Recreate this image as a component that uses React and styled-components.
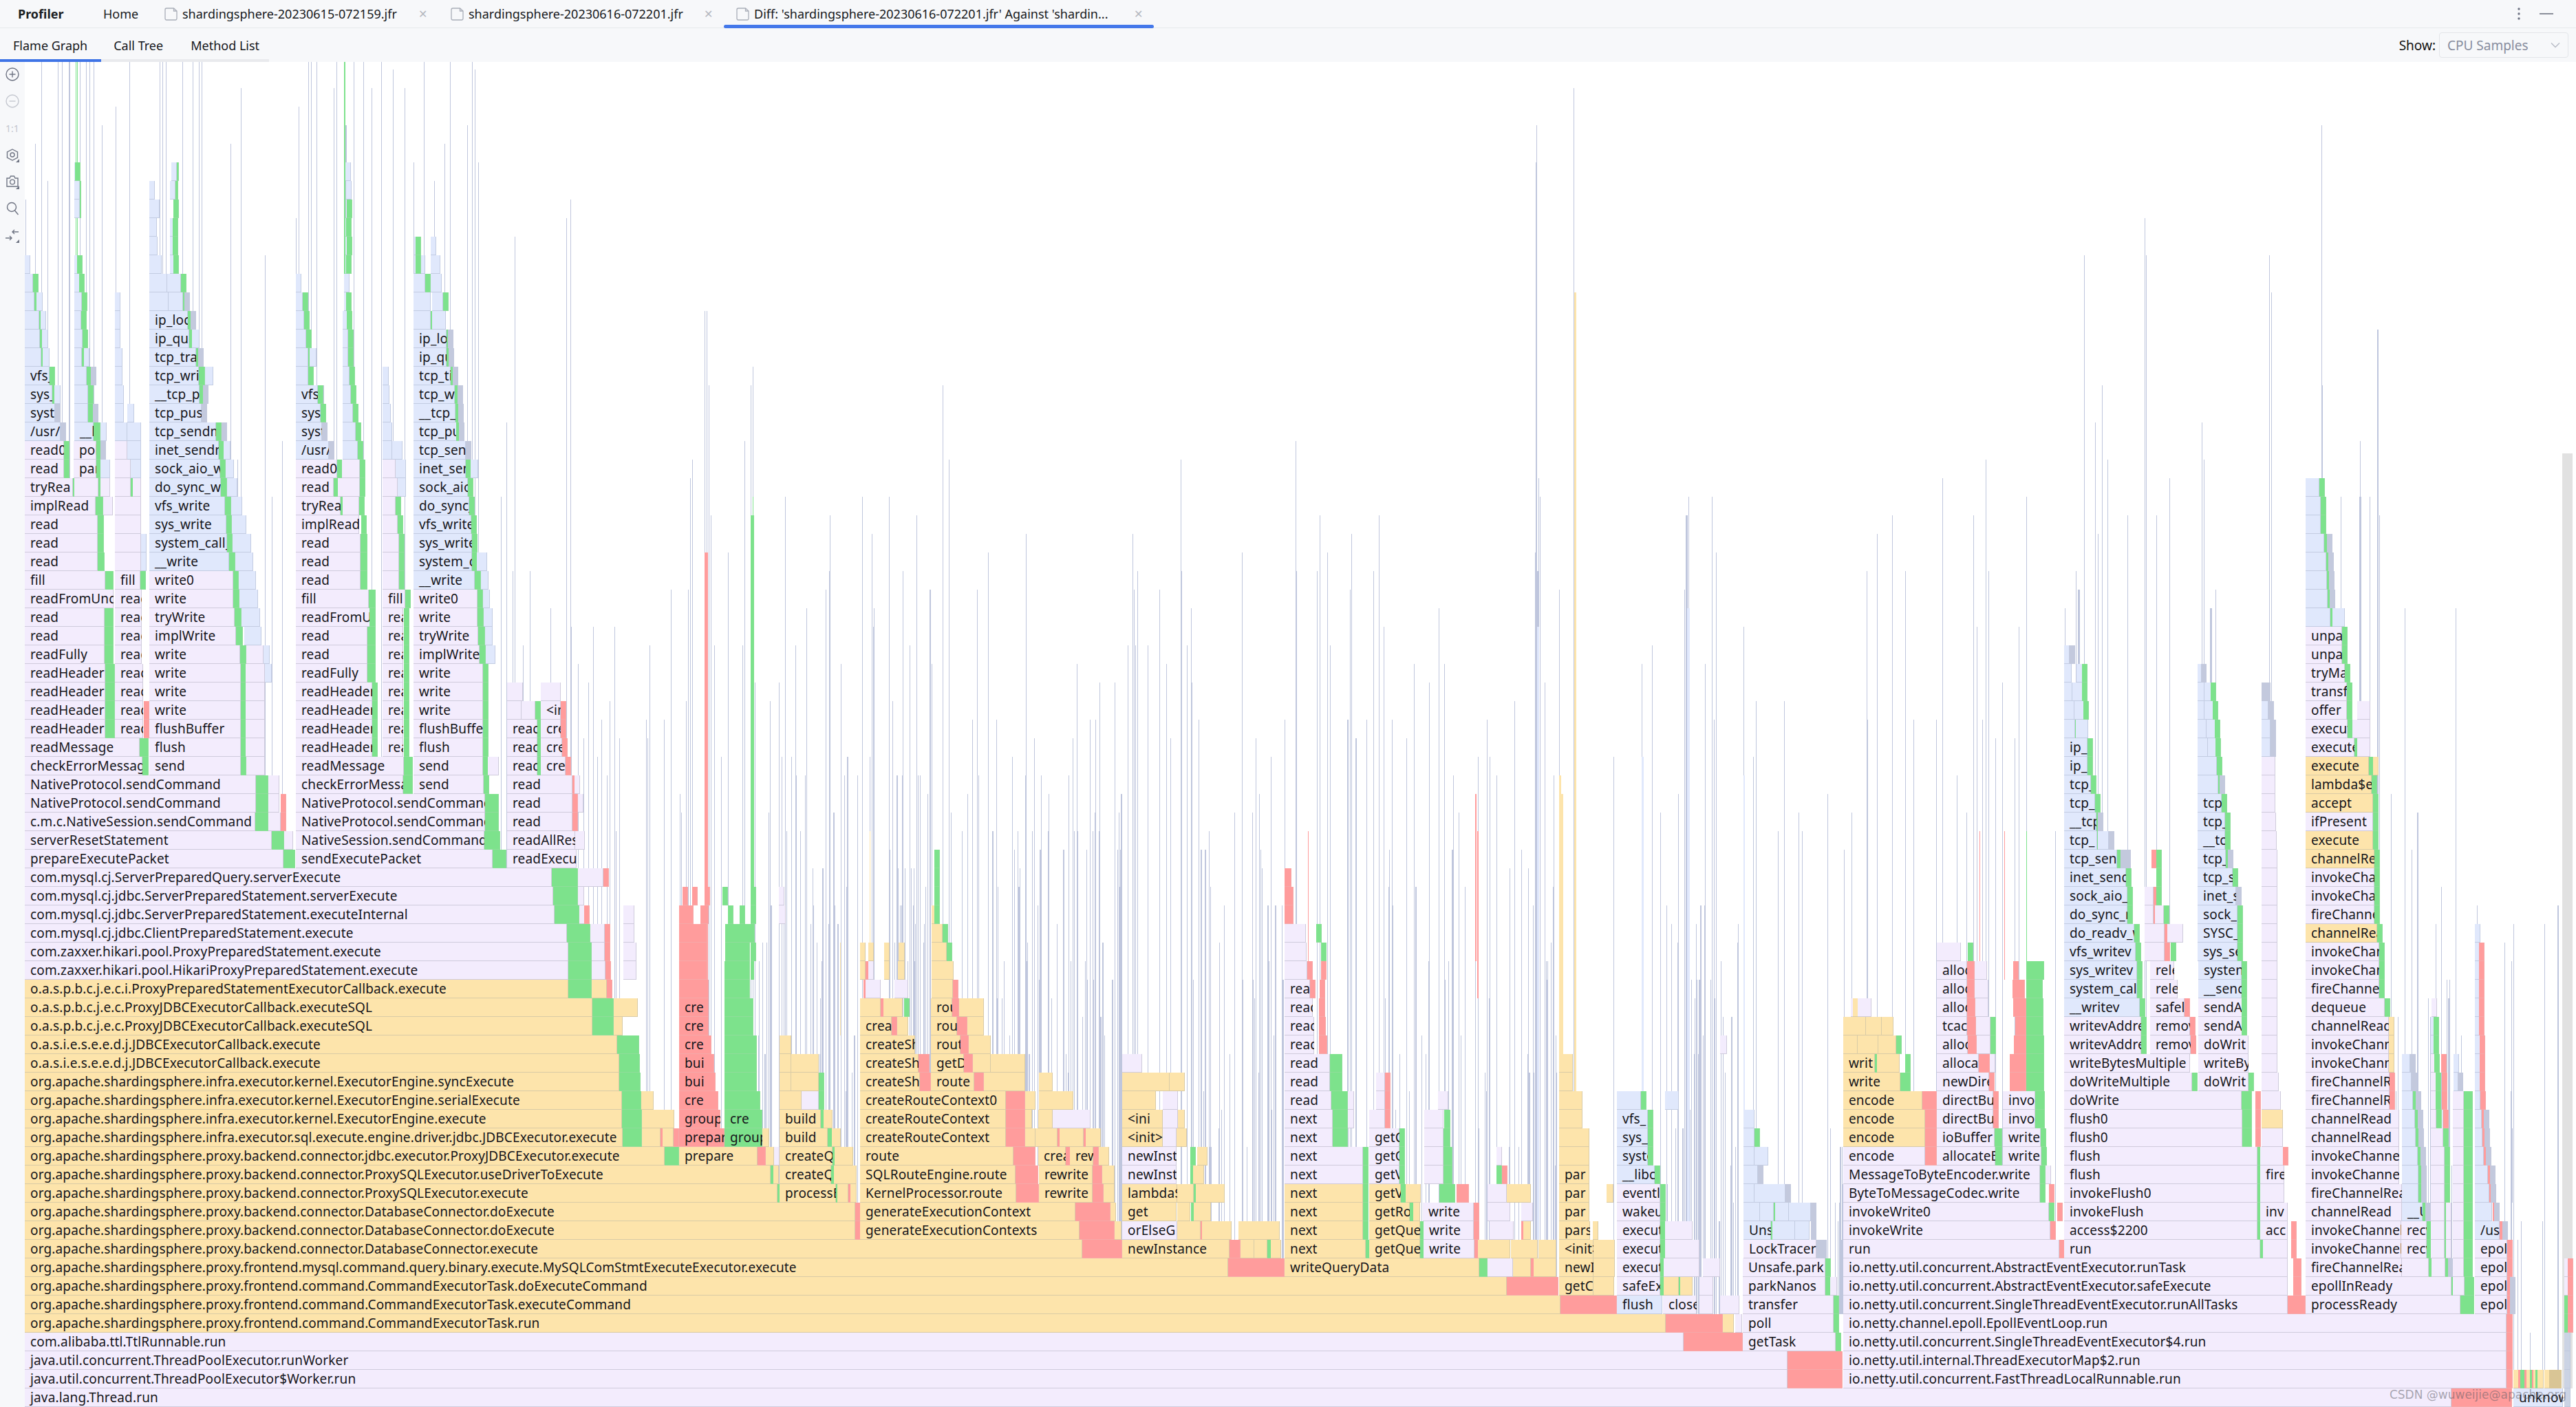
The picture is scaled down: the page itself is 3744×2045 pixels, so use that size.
import React from 'react';
import styled, { createGlobalStyle } from 'styled-components';

const ROW_H = 27;
const TOP_KS = 72;
const CHART_TOP = 90;
const BASE_Y = 2018;

const COLORS = {
  P: ['#F3ECFD', '#CFCBDC'],
  O: ['#FDE4AB', '#D9CBA6'],
  B: ['#E0E8FC', '#C3CCE2'],
  G: ['#7DE28C', '#8FDD9B'],
  R: ['#FF9C9C', '#F5A9A9'],
  S: ['#C3C9DD', '#C3C9DD'],
  T: ['#D9C595', '#D9C595'],
  C: ['#CBD3E4', '#BFC8DC'],
};

const DATA = {
  0: 'P36-3563 java.lang.Thread.run|R3563-3651|B3653-3725 unknown|C3727-3736',
  1: 'P36-2598 java.util.concurrent.ThreadPoolExecutor$Worker.run|R2598-2678|P2679-3643 io.netty.util.concurrent.FastThreadLocalRunnable.run|R3643-3652|O3653-3660|R3660-3663|G3663-3668|R3669-3672|O3672-3677|G3677-3680|R3680-3682|O3682-3685|G3685-3688|O3688-3697|O3698-3704|T3705-3723|C3727-3736',
  2: 'P36-2598 java.util.concurrent.ThreadPoolExecutor.runWorker|R2598-2678|P2679-3643 io.netty.util.internal.ThreadExecutorMap$2.run|R3643-3652|C3727-3736',
  3: 'P36-2447 com.alibaba.ttl.TtlRunnable.run|R2447-2533|P2533-2668 getTask|G2668-2674|P2679-3643 io.netty.util.concurrent.SingleThreadEventExecutor$4.run|R3643-3652|C3727-3736',
  4: 'O36-2421 org.apache.shardingsphere.proxy.frontend.command.CommandExecutorTask.run|R2421-2504|O2504-2520|P2522-2532|P2533-2665 poll|G2665-2671|P2679-3643 io.netty.channel.epoll.EpollEventLoop.run|R3643-3652|G3727-3731|R3732-3735',
  5: 'O36-2268 org.apache.shardingsphere.proxy.frontend.command.CommandExecutorTask.executeCommand|R2268-2350|B2350-2416 flush|P2417-2466 close|P2470-2490|P2500-2528|P2533-2665 transfer|G2665-2671|P2679-3325 io.netty.util.concurrent.SingleThreadEventExecutor.runAllTasks|R3325-3351|P3351-3576 processReady|G3576-3596|P3597-3644 epoll|R3644-3648|S3648-3651|G3727-3731|R3732-3735',
  6: 'O36-2190 org.apache.shardingsphere.proxy.frontend.command.CommandExecutorTask.doExecuteCommand|R2190-2265|O2266-2316 getC|O2316-2346|P2350-2413 safeEx|G2413-2416|O2418-2440|G2440-2442|O2442-2460|P2470-2490|P2533-2653 parkNanos|G2653-2657|P2660-2670|P2679-3325 io.netty.util.concurrent.AbstractEventExecutor.safeExecute|R3333-3345|P3351-3563 epollInReady|G3563-3565|P3565-3582|G3582-3596|P3597-3644 epoll|R3644-3648|S3648-3651|P3727-3730|R3732-3735',
  7: 'O36-1785 org.apache.shardingsphere.proxy.frontend.mysql.command.query.binary.execute.MySQLComStmtExecuteExecutor.execute|R1785-1867|O1867-2150 writeQueryData|G2150-2162|P2162-2199|O2199-2225|R2225-2229|O2229-2262|O2266-2316 newI|O2316-2347|P2350-2413 execut|G2413-2416|P2418-2470|P2475-2500|P2533-2653 Unsafe.park|G2653-2657|P2679-3325 io.netty.util.concurrent.AbstractEventExecutor.runTask|R3333-3345|P3351-3491 fireChannelRea|P3491-3530|G3530-3534|P3534-3554|G3554-3556|S3558-3561|P3565-3581|G3581-3594|P3597-3644 epoll|R3644-3648|P3727-3730|R3732-3735',
  8: 'O36-1573 org.apache.shardingsphere.proxy.backend.connector.DatabaseConnector.execute|R1573-1631|O1631-1787 newInstance|R1787-1803|O1803-1823|O1823-1842|G1842-1847|O1847-1862|O1867-1985 next|G1985-1989|O1990-2064 getQue|G2064-2069|P2069-2143 write|R2143-2147|O2148-2195|O2196-2235|O2236-2262|O2266-2316 <init>|O2316-2347|P2350-2413 execut|G2413-2416|P2420-2470|P2534-2640 LockTracer|S2640-2655|P2679-2993 run|R2993-3000|P3000-3285 run|G3285-3289|P3289-3325|R3330-3335|P3351-3490 invokeChannel|P3490-3527 recv|G3527-3530|P3533-3553|G3553-3555|P3555-3560|P3565-3581|G3581-3594|P3597-3644 epoll|R3644-3648',
  9: 'O36-1243 org.apache.shardingsphere.proxy.backend.connector.DatabaseConnector.doExecute|R1243-1250|O1250-1569 generateExecutionContexts|R1569-1620|O1620-1630|P1631-1711 orElseG|O1711-1745|R1745-1747|O1747-1790|O1800-1860|O1867-1981 next|G1981-1986|O1990-2064 getQue|G2064-2069|P2069-2142 write|R2142-2147|P2165-2200|R2211-2214|O2214-2225|O2266-2311 pars|O2315-2320|P2350-2413 execut|G2413-2417|P2420-2460|B2534-2574 Uns|G2574-2576|B2576-2609|B2609-2630|S2632-2640|P2679-2980 invokeWrite|R2980-2983|P3000-3281 access$2200|G3281-3285|P3285-3325 acc|R3330-3335|P3351-3490 invokeChannel|P3490-3527 recv|G3527-3530|P3533-3553|G3553-3555|P3555-3558|P3565-3581|G3581-3594|B3597-3633 /usr|R3633-3636|S3637-3645',
  10: 'O36-1243 org.apache.shardingsphere.proxy.backend.connector.DatabaseConnector.doExecute|R1243-1250|O1250-1563 generateExecutionContext|R1563-1614|O1614-1620|O1631-1710 get|O1711-1730|G1731-1735|O1735-1760|O1867-1981 next|G1981-1986|O1990-2049 getRo|G2049-2054|O2054-2064|P2068-2142 write|R2142-2147|P2162-2195|P2211-2228|O2266-2310 par|P2350-2413 wakeu|G2413-2417|B2534-2558|B2558-2578|G2578-2580|B2580-2600|B2600-2632|S2632-2640|P2679-2978 invokeWrite0|G2978-2981|R2990-2994|P3000-3281 invokeFlush|G3281-3285|P3285-3325 inv|P3351-3491 channelRead|B3491-3521 __U|G3521-3525|S3525-3530|P3533-3553|G3553-3555|P3555-3558|P3565-3581|G3581-3594|B3597-3622|R3623-3625|S3625-3630',
  11: 'O36-1130 org.apache.shardingsphere.proxy.backend.connector.ProxySQLExecutor.execute|G1130-1133|O1133-1215 processE|G1215-1217|O1217-1233|R1233-1236|O1236-1245|O1250-1477 KernelProcessor.route|R1477-1510|O1510-1588 rewrite|R1588-1604|O1604-1620|O1631-1711 lambda$|O1711-1735|G1735-1738|O1738-1780|O1867-1981 next|G1981-1986|O1990-2036 getV|G2036-2043|O2043-2065|G2092-2115|R2117-2135|P2162-2190|O2190-2225|O2266-2310 par|O2335-2345|P2350-2413 eventl|G2413-2417|B2534-2550|B2550-2595|S2595-2600|P2679-2965 ByteToMessageCodec.write|G2965-2973|R2978-2982|P3000-3281 invokeFlush0|G3281-3285|P3285-3320|P3351-3491 fireChannelRea|B3491-3515|G3515-3519|S3519-3523|P3533-3553|G3553-3555|P3565-3581|G3581-3594|B3597-3618|R3618-3620|S3620-3626',
  12: 'O36-1120 org.apache.shardingsphere.proxy.backend.connector.ProxySQLExecutor.useDriverToExecute|G1120-1124|O1124-1132|O1133-1208 createQ|G1208-1212|O1212-1245|O1250-1476 SQLRouteEngine.route|R1476-1509|O1510-1588 rewrite|R1588-1602|O1602-1620|P1631-1710 newInst|G1730-1734|O1734-1750|P1867-1981 next|G1981-1986|P1990-2034 getV|G2034-2041|P2070-2098|G2098-2111|G2175-2183|R2183-2190|O2266-2310 par|B2350-2405 __libc|G2405-2409|B2534-2555|S2555-2560|P2679-2965 MessageToByteEncoder.write|G2965-2973|P2973-2978|P3000-3281 flush|G3281-3285|P3285-3320 fire|P3351-3487 invokeChannel|B3491-3515|G3515-3519|S3519-3523|P3533-3553|G3553-3555|P3565-3581|G3581-3594|B3597-3616|R3616-3619|S3619-3625',
  13: 'O36-966 org.apache.shardingsphere.proxy.backend.connector.jdbc.executor.ProxyJDBCExecutor.execute|G966-987|O987-1101 prepare|R1101-1113|O1113-1125|P1125-1132|O1133-1210 createQ|G1210-1213|O1213-1240|O1250-1473 route|R1473-1505|O1509-1549 crea|R1549-1555|O1555-1589 rew|R1589-1597|O1597-1612|P1631-1710 newInst|G1730-1733|O1740-1755|P1867-1981 next|G1981-1986|P1990-2034 getO|G2034-2041|P2070-2098|G2098-2111|P2175-2183|O2266-2310|B2350-2395 syste|G2395-2398|B2534-2550|B2550-2570|P2679-2798 encode|R2798-2815|P2815-2900 allocateBu|G2900-2910|P2911-2967 write|G2967-2972|P3000-3281 flush|G3281-3285|P3285-3320|R3318-3320|P3351-3487 invokeChannel|B3491-3514|G3514-3518|S3518-3522|P3533-3553|G3553-3555|P3565-3581|G3581-3594|B3597-3610|R3610-3613|S3613-3620',
  14: 'O36-905 org.apache.shardingsphere.infra.executor.sql.execute.engine.driver.jdbc.JDBCExecutor.execute|G905-933|O933-960|R960-963|O963-979|R979-984|R987-1053 prepar|G1053-1108 group|O1108-1118|O1133-1203 build|G1203-1209|O1209-1222|O1250-1462 createRouteContext|R1462-1490|O1490-1505|O1505-1537|R1537-1540|O1540-1575|R1575-1578|O1578-1600|O1631-1690 <init>|P1690-1710|O1710-1725|P1867-1937 next|G1937-1959|P1990-2034 getC|G2034-2041|P2070-2098|G2098-2108|O2266-2310|B2350-2395 sys_|G2395-2398|B2534-2550|G2550-2552|O2679-2798 encode|R2798-2815|P2815-2899 ioBuffer|G2899-2910|P2911-2966 write|G2966-2971|P3000-3259 flush0|G3259-3273|R3278-3283|P3287-3318|P3351-3487 channelRead|B3491-3511|G3511-3515|S3515-3519|P3533-3551|G3551-3553|P3565-3581|G3581-3594|B3597-3608|R3608-3611|S3611-3616',
  15: 'O36-904 org.apache.shardingsphere.infra.executor.kernel.ExecutorEngine.execute|G904-933|O933-980|R987-1047 group|G1053-1108 cre|O1133-1193 build|G1193-1197|O1197-1210|O1250-1462 createRouteContext|R1462-1490|O1490-1500|O1509-1530|P1530-1585|O1631-1690 <ini|P1690-1712|O1712-1722|P1867-1937 next|G1937-1959|P1959-1968|P1990-2013|R2013-2021|P2070-2098|G2099-2108|O2266-2300|B2350-2395 vfs_|G2395-2398|B2534-2550|O2679-2798 encode|R2798-2815|P2815-2897 directBu|R2897-2900|P2911-2958 invoke|G2958-2972|P3000-3259 flush0|G3259-3273|R3278-3283|O3287-3318|P3351-3487 channelRead|B3491-3510|G3510-3514|S3514-3518|P3533-3541|G3541-3546|R3551-3553|P3565-3581|G3581-3594|B3597-3607|R3607-3610|S3610-3613',
  16: 'O36-904 org.apache.shardingsphere.infra.executor.kernel.ExecutorEngine.serialExecute|G904-932|O932-950|R987-1044 cre|G1053-1105|O1133-1165|P1165-1190|G1190-1195|O1250-1462 createRouteContext0|R1462-1490|O1490-1505|O1510-1560|O1631-1680|P1690-1712|P1867-1935 read|G1935-1959|P1959-1968|P2000-2013|R2013-2021|P2090-2105|O2266-2300|B2350-2385|G2385-2388|B2420-2440|O2679-2794 encode|R2794-2815|P2815-2897 directBu|R2897-2900|P2911-2958 invoke|G2958-2972|P3000-3258 doWrite|G3258-3273|R3278-3283|P3287-3315|P3351-3473 fireChannelR|R3473-3478|B3491-3507|G3507-3511|S3511-3514|P3533-3540|G3540-3545|R3549-3552|P3565-3581|G3581-3594|B3597-3605|R3605-3608',
  17: 'O36-900 org.apache.shardingsphere.infra.executor.kernel.ExecutorEngine.syncExecute|G900-931|R987-1040 bui|G1053-1100|O1133-1150|O1150-1190|G1190-1194|O1250-1337 createShar|R1337-1353|O1353-1416 route|R1416-1430|O1430-1490|O1510-1530|O1631-1700|O1700-1722|P1867-1933 read|G1933-1951|P2000-2013|R2013-2021|O2266-2286|O2679-2762 write|G2762-2777|P2815-2891 newDire|R2891-2899|R2921-2945|G2945-2971|P3000-3186 doWriteMultiple|G3186-3194|P3195-3268 doWrit|G3268-3272|P3287-3312|P3351-3473 fireChannelR|R3473-3478|B3491-3505|S3505-3512|P3533-3540|G3540-3545|R3549-3552|B3566-3572|S3572-3575|B3597-3604|R3604-3607',
  18: 'O36-900 o.a.s.i.e.s.e.e.d.j.JDBCExecutorCallback.execute|G900-930|R987-1038 bui|G1053-1100|O1133-1150|O1150-1190|O1250-1335 createShar|R1335-1351|O1353-1401 getDa|R1401-1414|O1414-1440|O1440-1490|P1631-1660|P1867-1933 read|G1933-1951|O2266-2286|O2679-2725 writ|G2725-2728|O2728-2761|G2769-2776|P2815-2876 allocate|R2876-2892|P2892-2899|R2921-2945|G2945-2971|P3000-3183 writeBytesMultiple|P3195-3268 writeBy|P3287-3310|P3351-3472 invokeChann|O3472-3477|B3491-3503|S3503-3508|P3533-3538|G3538-3543|R3548-3551|B3566-3570|B3597-3604|R3604-3606',
  19: 'O36-897 o.a.s.i.e.s.e.e.d.j.JDBCExecutorCallback.execute|G897-929|R987-1034 cre|G1053-1100|O1133-1150|O1250-1330 createSh|O1353-1396 route|R1396-1408|O1408-1440|P1867-1910 read|R1917-1929|P2500-2510|O2679-2700|O2700-2730|O2730-2756|G2756-2760|P2815-2860 alloca|R2860-2873|P2873-2893|G2893-2899|R2927-2945|G2945-2971|P3000-3112 writevAddre|G3112-3116|P3125-3184 remov|R3184-3187|P3195-3268 doWrit|P3287-3310|P3351-3472 invokeChann|O3472-3477|B3533-3537|G3537-3541|B3597-3604|R3604-3606',
  20: 'O36-861 o.a.s.p.b.c.j.e.c.ProxyJDBCExecutorCallback.executeSQL|G861-892|O892-905|R987-1030 cre|G1053-1095|O1250-1296 creat|R1296-1304|O1304-1320|O1353-1391 route|R1391-1406|O1406-1430|P1867-1910 read|R1917-1927|O2679-2712|O2712-2735|O2735-2752|P2815-2859 tcach|R2859-2872|P2872-2893|G2893-2897|R2929-2945|G2945-2970|P3000-3112 writevAddre|G3112-3116|P3125-3183 remov|R3183-3187|P3195-3262 sendAc|G3258-3264|P3287-3310|P3351-3472 channelRead|O3472-3477|B3533-3537|G3537-3541|B3597-3603|R3603-3606',
  21: 'O36-861 o.a.s.p.b.c.j.e.c.ProxyJDBCExecutorCallback.executeSQL|G861-892|O892-927|R987-1030 cre|G1053-1095|O1250-1280|R1280-1284|O1284-1312|G1314-1318|O1353-1384 roul|R1384-1394|O1394-1430|P1867-1908 read|R1917-1926|P2690-2695|O2693-2698|P2700-2720|P2815-2859 alloca|R2859-2871|P2871-2890|R2926-2945|G2945-2970|B3000-3110 __writev|G3110-3114|P3125-3175 safel|R3175-3182|P3195-3262 sendAc|G3258-3264|P3287-3310|P3351-3466 dequeue|G3466-3469|P3534-3538|B3597-3603|R3603-3606',
  22: 'O36-826 o.a.s.p.b.c.j.e.c.i.ProxyPreparedStatementExecutorCallback.execute|G826-860|O860-882|R882-885|R987-1030|G1053-1090|R1255-1258|P1258-1280|P1300-1320|O1354-1385|R1385-1391|P1867-1904 read|R1904-1909|R1918-1924|P2815-2859 alloca|R2859-2870|P2870-2890|R2925-2943|G2945-2969|B3000-3106 system_call|G3106-3112|P3125-3165 relea|B3195-3258 __senc|G3258-3262|P3287-3310|P3351-3458 fireChannel|G3458-3462|B3597-3603|R3603-3606',
  23: 'P36-826 com.zaxxer.hikari.pool.HikariProxyPreparedStatement.execute|G826-860|P860-880|R880-883|P906-925|R987-1028|G1053-1090|O1250-1258|R1258-1261|P1262-1270|O1285-1292|O1305-1315|O1354-1386|P1867-1900|R1900-1904|R1920-1925|P2815-2859 alloca|R2859-2870|P2870-2888|R2926-2934|G2945-2971|B3000-3106 sys_writev|G3106-3112|P3125-3160 rele|B3195-3258 systen|G3258-3262|P3287-3310|P3351-3458 invokeChan|G3458-3462|B3597-3603|R3603-3605',
  24: 'P36-826 com.zaxxer.hikari.pool.ProxyPreparedStatement.execute|G826-860|P860-879|R879-882|P906-925|R987-1028|G1054-1090|G1091-1097|O1250-1256|O1262-1268|O1285-1290|O1306-1315|O1354-1376|G1376-1378|P1867-1899|G1920-1923|P2815-2850|G2860-2863|B3000-3104 vfs_writev|G3104-3109|P3117-3146|R3146-3150|G3155-3160|B3194-3252 sys_se|G3252-3258|P3287-3310|P3351-3458 invokeChan|G3458-3462|B3597-3603|R3603-3605',
  25: 'P36-824 com.mysql.cj.jdbc.ClientPreparedStatement.execute|G824-858|P858-879|R879-882|P906-922|R987-1028|G1054-1097|O1354-1370|G1370-1376|P1867-1898|G1913-1917|B3000-3102 do_readv_w|G3102-3108|P3117-3146|R3146-3150|P3150-3173|B3194-3252 SYSC_|G3252-3257|P3287-3310|O3351-3455 channelRea|G3455-3460|B3597-3602',
  26: 'P36-806 com.mysql.cj.jdbc.ServerPreparedStatement.executeInternal|G806-842|P842-849|R849-851|P906-922|R987-1008|R1018-1030|G1058-1062|G1075-1078|G1091-1097|P1132-1142|O1354-1364|G1358-1365|R1867-1880|B3000-3092 do_sync_r|G3092-3100|P3117-3130|R3130-3132|P3132-3145|G3145-3147|B3194-3252 sock_|G3252-3255|P3287-3310|P3351-3451 fireChanne|G3451-3457',
  27: 'P36-804 com.mysql.cj.jdbc.ServerPreparedStatement.serverExecute|G804-840|P840-849|R992-996|R1006-1010|R1024-1030|G1050-1058|G1091-1097|P1132-1137|G1358-1364|R1867-1880|B3000-3092 sock_aio_v|G3092-3100|P3117-3130|R3130-3132|G3134-3140|B3194-3250 inet_s|S3250-3256|P3287-3310|P3351-3451 invokeChan|G3451-3457',
  28: 'P36-802 com.mysql.cj.ServerPreparedQuery.serverExecute|G802-840|P840-877|R877-880|G1358-1362|R1867-1877|B3000-3090 inet_send|G3090-3097|G3134-3140|B3194-3245 tcp_s|G3245-3250|P3287-3310|P3351-3451 invokeChan|G3451-3457',
  29: 'P36-412 prepareExecutePacket|G412-429|P430-716 sendExecutePacket|G716-736|P737-838 readExecu|G1358-1363|B3000-3077 tcp_sen|G3077-3082|S3082-3097|R3127-3129|G3134-3140|B3194-3235 tcp_|G3235-3238|S3238-3245|P3287-3310|O3351-3451 channelRea|G3451-3457',
  30: 'P36-395 serverResetStatement|G395-413|P413-426|P430-704 NativeSession.sendCommand|G704-727|P737-836 readAllRes|P836-850|B3000-3048 tcp_|G3048-3049|B3049-3065|S3065-3073|B3194-3234 __tc|G3234-3237|P3287-3309|O3351-3449 execute|G3449-3456',
  31: 'P36-371 c.m.c.NativeSession.sendCommand|G371-390|P390-408|R408-410|P430-705 NativeProtocol.sendCommand|G705-725|P737-832 read|R832-835|B3000-3047 __tcp|G3047-3049|S3049-3055|B3194-3234 tcp_|G3234-3237|P3287-3308|P3351-3449 ifPresent|G3449-3456',
  32: 'P36-372 NativeProtocol.sendCommand|G372-390|P390-406|R408-410|P430-705 NativeProtocol.sendCommand|G705-725|P737-832 read|R832-835|P840-845|B3000-3045 tcp_|G3045-3047|B3194-3229 tcp_|G3229-3233|P3287-3307|O3351-3449 accept|G3449-3456',
  33: 'P36-372 NativeProtocol.sendCommand|G372-390|P390-406|P430-586 checkErrorMessag|G586-600|P601-703 send|G703-710|P737-832 read|R832-835|P835-843|B3000-3039 tcp_|G3039-3042|B3194-3224|G3224-3226|S3226-3232|P3287-3307|O3351-3447 lambda$ex|G3447-3455',
  34: 'P36-207 checkErrorMessage|G207-216|P217-350 send|G350-358|P358-385|P430-587 readMessage|G587-600|P601-702 send|G702-709|P709-725|P737-781 read|G781-784|P786-822 crea|R822-824|B3000-3034 ip_|G3034-3036|B3194-3222|G3222-3224|P3287-3307|O3351-3443 execute|G3443-3449|O3449-3454',
  35: 'P36-203 readMessage|G203-216|P217-350 flush|G350-357|P357-385|P430-541 readHeader|G541-549|P556-586 read|G587-592|P601-702 flush|G702-709|P737-781 reac|G781-783|P786-817 cre|R817-820|B3000-3034 ip_|G3034-3036|B3194-3209|B3209-3223|G3220-3222|B3287-3300|S3300-3306|P3351-3422 execute|G3422-3426|P3426-3445',
  36: 'P36-153 readHeader|G153-167|P167-208 reac|R209-213|P217-350 flushBuffer|G350-357|P357-385|P430-541 readHeader|G541-549|P556-586 read|G587-592|P601-702 flushBuffer|G702-709|P737-781 reac|G781-783|P786-815 cre|R815-820|B3000-3016|G3016-3017|B3017-3035|B3194-3207|B3207-3221|G3219-3221|B3287-3300|S3300-3306|P3351-3412 execut|G3412-3419|P3419-3445',
  37: 'P36-153 readHeader|G153-167|P167-208 reac|R209-213|P217-350 write|G350-357|P357-385|P430-541 readHeader|G541-549|P556-586 read|G587-592|P601-702 write|G702-709|P737-758|P758-778|G778-782|P786-815 <in|R815-820|B3000-3015|B3015-3030|G3028-3030|B3194-3204|B3204-3218|G3216-3218|B3287-3297|S3297-3300|P3351-3411 offer|G3411-3418|P3426-3445',
  38: 'P36-153 readHeader|G153-167|P167-208 reac|P217-350 write|G350-357|P357-385|P430-541 readHeader|G541-549|P556-586 read|G587-592|P601-702 write|G702-709|P737-760|P786-815|B3000-3012|B3012-3028|G3026-3028|B3194-3204|B3204-3215|G3213-3215|S3287-3290|S3292-3294|P3351-3411 transfer|G3411-3417',
  39: 'P36-153 readHeader|G153-167|P167-208 reac|P217-350 write|G350-357|P357-385|B385-395|P430-534 readFully|G534-546|P556-586 read|G587-592|P601-702 write|G702-709|B3000-3011|B3018-3028|G3026-3028|B3194-3199|S3199-3205|P3351-3408 tryMa|G3408-3412',
  40: 'P36-152 readFully|G152-165|P167-206 reac|P217-349 write|G349-358|P358-383|B383-392|P430-534 read|G534-546|P556-586 read|G587-592|P601-697 implWrite|G697-706|B706-720|B3000-3008|S3008-3013|P3351-3404 unpar|G3404-3408',
  41: 'P36-152 read|G152-165|P167-206 reac|P217-343 implWrite|G343-353|B355-380|P430-534 read|G534-546|P556-586 read|G587-592|P601-695 tryWrite|G695-705|B705-716|P3351-3404 unpar|G3404-3408',
  42: 'P36-152 read|G152-165|P167-206 reac|P217-341 tryWrite|G341-351|B351-378|P430-546 readFromUr|G537-546|P556-586 read|G587-592|P601-694 write|G694-703|B703-716|B3351-3387|G3387-3390|B3390-3408',
  43: 'P36-165 readFromUnc|P167-206 reac|P217-339 write|G339-348|B348-375|P430-536 fill|G536-546|P556-589 fill|G589-592|P601-694 write0|G694-702|B702-712|B3351-3383|G3383-3386|S3386-3392',
  44: 'P36-153 fill|G153-165|P167-204 fill|G204-208|P217-339 write0|G339-347|B347-372|P430-524 read|G524-534|P556-580|G580-584|B601-690 __write|G690-699|B699-710|B3351-3382|G3382-3385|S3385-3388',
  45: 'P36-142 read|G142-152|P167-205|B205-208|B217-333 __write|G333-342|B342-368|P430-524 read|G524-534|P556-580|G580-584|B601-686 system_c|G686-693|B693-708|B3351-3381|G3381-3384|S3384-3385',
  46: 'P36-142 read|G142-151|P167-205|B205-208|B217-330 system_call_|G330-338|B338-365|P430-524 read|G524-534|P556-580|G580-584|B601-686 sys_write|G686-693|B3351-3378|G3378-3382|S3382-3384',
  47: 'P36-142 read|G142-151|P167-205|B217-329 sys_write|G329-337|B337-358|P430-522 implRead|G525-530|P556-578|G578-583|B601-685 vfs_write|G685-693|B3351-3373|G3373-3376',
  48: 'P36-139 implRead|G139-150|P150-164|P167-205|B217-327 vfs_write|G327-336|B336-352|P430-495 tryRea|G495-498|P498-522|G522-530|P556-575|G575-580|B601-682 do_sync_|G682-689|B3351-3373|G3373-3375',
  49: 'P36-106 tryRea|G106-108|P108-143|G143-146|P146-160|P167-190|G190-193|P193-205|B217-321 do_sync_wr|G321-330|B330-345|P430-485 read|G485-491|P491-523|G523-528|P556-578|B578-590|B601-680 sock_aio|G680-686|B3351-3371|G3371-3374',
  50: 'P36-93 read|G93-100|P107-140 par|G140-146|B146-160|P167-190|B190-205|B217-320 sock_aio_w|G320-328|B328-340|P430-490 read0|G490-497|P497-523|G523-528|P556-575|B575-590|B601-677 inet_sen|G677-684|B684-695',
  51: 'P36-93 read0|G93-99|P107-140 pol|G140-146|S146-150|P167-185|B185-205|B217-318 inet_sendm|G318-325|B325-335|B430-478 /usr/|S478-486|B498-520|G520-524|B556-570|B570-585|B601-677 tcp_senc|S677-684',
  52: 'B36-88 /usr/|S88-95|B108-136 __l|G136-146|B146-155|B167-185|B185-205|B217-314 tcp_sendm|G314-322|S322-328|B430-468 syst|S468-474|B498-517|G517-522|B556-570|B601-665 tcp_pu|G663-667|S667-675',
  53: 'B36-80 syst|S80-88|B108-128|G128-135|S135-138|B167-180|B185-195|B217-293 tcp_push|S293-299|B430-466 sys_|G466-470|B498-513|G513-518|B556-568|B601-662 __tcp_|G662-666|S666-670',
  54: 'B36-76 sys_|G76-79|B79-88|B108-128|G128-135|B167-180|B217-290 __tcp_pu|G290-295|S295-298|B430-462 vfs_|G462-466|B498-510|G510-514|B556-566|B601-661 tcp_w|G661-665|S665-668',
  55: 'B36-72 vfs_|G72-75|B108-126|G126-132|S132-135|B167-178|B217-289 tcp_writ|G289-298|B298-310|B430-448|G448-451|B498-508|G508-512|B556-565|B601-655 tcp_ti|G655-658|S658-662',
  56: 'B36-60|G60-62|B62-72|B108-119|G119-122|B122-128|B167-178|B217-285 tcp_tra|G285-288|S288-292|B430-448|G448-450|B450-460|B498-506|G506-509|B601-649 ip_qu|G649-652|S652-656',
  57: 'B36-58|G58-61|B61-70|B108-120|G120-122|B167-174|B217-275 ip_que|G275-279|B279-290|B430-445|G445-448|B498-506|G506-508|B601-649 ip_lo|G649-651|S651-654',
  58: 'B36-57|G57-59|B59-65|B108-118|G118-120|B167-170|B217-273 ip_loc|G273-277|S277-282|B430-442|G442-444|B498-504|G504-506|B601-626|G626-628|B628-648',
  59: 'B36-50|G50-53|B53-62|B108-119|G119-121|B167-172|B217-245|B245-266|G266-268|S268-272|B430-440|G440-442|B500-503|G503-505|B601-626|B628-644|G644-646',
  60: 'B36-48|G48-50|B108-115|G115-117|B217-243|B243-263|G263-265|B430-438|B500-506|B601-618|G618-620|B626-642',
  61: 'B36-44|B108-114|G112-114|B217-235|B247-260|G252-254|B502-506|G503-505|B602-618|G604-606|B626-640',
  62: 'B217-229|B247-258|G251-253|B502-507|G504-506|B602-612|G604-606|B626-632',
  63: 'B217-228|B247-255|G251-253|B502-507|G503-505',
  64: 'B217-222|B224-227|G110-112|B108-112|G252-253|B503-506|G504-505',
  65: 'B217-219|G110-112|B108-111|G251-253|B247-250|B503-506',
  66: 'G252-254|B249-252|B108-111|G109-111|B502-505',
};

const SPIKES = [
  [37,64],[51,67],[60,72],[69,65],[84,72],[90,72],[100,72],[101,72],[116,72],[125,72],[130,72],[136,72],[148,68],[168,69],[188,72],[232,72],[236,72],[241,72],[265,72],[280,72],[289,72],[293,72],[335,67],[350,70],[385,61],[430,63],[434,69],[448,72],[452,72],[460,72],[485,70],[489,72],[514,72],[528,72],[540,70],[554,72],[571,71],[588,70],[601,66],[616,72],[631,65],[646,67],[654,72],[679,68],[686,72],[690,71],[695,66],[748,62],[823,63],[829,64],
  [110,72,1,'G'],[112,72,1,'G'],[500,72,2,'G'],[502,68,2],[500,68,2,'G'],
  [320,52],[345,50],[362,46],[395,48],[410,51],[470,54],[508,55],[540,53],[612,50],[728,48],[736,52],[745,44],[760,40],[770,44],[790,38],[800,42],[808,37],[812,36],[830,41],[840,39],[848,35],[855,38],[862,41],[868,34],[874,36],[882,33],[886,37],[895,30],[900,35],
  [893,41],[944,40],[939,36],[941,35],[965,36],[975,43],[1000,43],[1003,49],[1006,50],[997,37],[988,32],[990,31],[1024,58],[1027,58],[1030,54],[1033,47],[1058,45],[1048,34],[1038,40],[1082,51],[1091,54],[1094,55],[1097,38],[1079,40],[1119,37],[1132,38],[1136,34],[1141,48],[1172,42],[1156,40],[1200,43],[1205,44],[1222,39],[1227,33],[1206,47],[1246,33],[1253,48],[1264,34],[1267,46],[1269,41],[1270,42],[1292,48],[1297,37],[1311,33],[1312,44],[1322,40],[1332,47],[1334,33],[1337,33],[1351,43],[1352,43],[1354,39],[1370,54],[1379,50],[1382,31],[1398,30],[1406,32],[1413,36],[1420,43],[1422,33],[1436,45],[1448,36],[1471,34],[1474,29],[1491,46],[1503,35],[1512,29],[1553,33],[1559,35],[1565,39],[1579,29],[1584,36],[1592,36],[1598,38],[1620,38],[1626,31],[1628,29],[1639,40],[1646,46],[1648,43],[1650,40],[1653,44],[1668,40],[1685,43],[1695,39],[1701,35],[1716,50],[1717,44],[1725,40],[1731,42],[1732,38],[1742,36],[1745,28],[1794,31],[1805,45],[1820,31],[1825,35],[1830,32],[1847,34],[1867,36],[1883,51],[1884,44],[1914,44],[1918,47],[1929,45],[1933,40],[1959,36],[1962,43],[1964,46],[1971,35],[1996,44],[2004,47],
  [1958,36],[1970,35],[1986,36],[1996,39],[2011,41],[2023,36],[2044,35],[2055,39],[2077,38],[2091,42],[2099,39],[2112,33],[2120,31],[2148,34],[2165,34],[2175,33],[2161,36],[2201,37],[2211,29],[2231,45],[2232,66],[2233,68],[2236,49],[2238,48],[2234,44,2],[2245,38],[2258,33],[2266,43],[2345,34],[2386,39],[2401,40],[2413,31],[2439,32],[2448,43],[2454,48],[2450,47,3],[2478,39],[2488,48],[2491,36],[2494,45],[2534,41],[2548,34],[2552,37],[2593,37],[2656,32],[2614,31],[2584,30],[2619,30],[2680,29],[2691,31],[2713,44],[2714,36],[2728,46],[2750,47],[2769,44],[2781,36],[2814,36],[2823,49],[2844,33],[2858,31],[2868,47],[2873,41],[2881,36],[2886,50],[2890,44],[2900,35],[2910,38],[2928,35],[2934,41],[2945,48],[2987,30],[3001,42],[3017,44],[3020,43,3],[3029,61],[3045,52],[3049,46],[3055,54],[3063,50],[3092,47],[3117,63],[3119,61],[3134,47],[3153,49],[3200,52],[3203,50],[3212,42,3],[3220,43],[3298,61],[3301,59],[3374,68],[3375,54],[3402,48],[3429,48,3],[3430,51],[3444,48],[3455,57,2],[3458,47],[3495,42],[3569,42],[3475,32],[3495,30],[3505,29],[3513,31,2],[3540,25],[3548,27],[3560,22],[3600,26],[3640,24],[3650,23],
  [3653,25,1,'S',2],[3659,8,1,'S',2],[3664,9,1,'S',2],[3677,3,1,'S',2],[3695,9,1,'S',2],[3698,25,1,'S',2],[3717,26,2,'S',2],[3724,10,1,'S',2],[3649,16,1,'S',2],[3649,14,3,'S',11],[3730,9,1,'S',7],[3734,9,1,'S',7],
  [1024,45,5,'R',23],[1091,47,5,'G',23],[1094,48,1,'G',23],[2288,59,3,'O',6],[2287,70,1],[2266,33,3,'O',6],[2269,32,3,'O',6],[2234,41,3,'B',6],[2452,42,4,'B',6],[2386,34,3,'B',6],[2534,33,2,'B',6],[1901,30,1,'R',23],[2144,32,2,'R',24],[2147,30,2,'R',22],[2877,30,1,'R',24],[2913,30,1,'R',23],[2945,30,1,'G',17],[1264,30,1,'O',24],[1221,24,1,'O',20],[1195,28,2],[1212,26,2],[1230,27,2],
];

function seededSpikes() {
  const out = [];
  const ranges = [
    [1102, 1246, 15, 34, 46], [1290, 1352, 23, 34, 22], [1430, 1630, 17, 33, 56], [1730, 1866, 12, 30, 34],
    [2000, 2180, 12, 30, 30], [2190, 2264, 10, 28, 24], [2420, 2530, 8, 27, 40], [2660, 2678, 8, 16, 8],
    [3470, 3580, 9, 22, 24],
  ];
  let s = 17;
  const rnd = () => { s = (s * 16807) % 2147483647; return s / 2147483647; };
  ranges.forEach(([a, b, lo, hi, n]) => {
    for (let i = 0; i < n; i += 1) {
      out.push([Math.round(a + rnd() * (b - a)), Math.round(lo + rnd() * (hi - lo)), rnd() > 0.8 ? 2 : 1]);
    }
  });
  return out;
}

const parseRow = (line) =>
  line.split('|').map((part) => {
    const m = part.match(/^([A-Z])(\d+)-(\d+)(?: (.*))?$/);
    return { c: m[1], x0: +m[2], x1: +m[3], label: m[4] };
  });

const Global = createGlobalStyle`
  html, body { margin: 0; padding: 0; height: 100%; background: #fff; overflow: hidden; }
  #root { height: 100%; }
`;

const Page = styled.div`
  width: 3744px;
  height: 2045px;
  display: flex;
  flex-direction: column;
  overflow: hidden;
  background: #fff;
  color: #111;
  font-family: "Noto Sans", sans-serif;
  font-size: 18px;
`;

const TopBar = styled.header`
  flex: 0 0 41px;
  box-sizing: border-box;
  height: 41px;
  display: flex;
  align-items: center;
  background: #f7f8fa;
  border-bottom: 1px solid #e7e9ec;
`;

const Brand = styled.div`
  font-weight: 700;
  font-size: 18px;
  margin-left: 26px;
  width: 124px;
  color: #1c1f24;
`;

const HomeTab = styled.div`
  width: 71px;
  color: #16181c;
`;

const FileTab = styled.div`
  position: relative;
  height: 40px;
  box-sizing: border-box;
  display: flex;
  align-items: center;
  gap: 6px;
  padding: 0 16px 0 17px;
  white-space: nowrap;
  width: ${(p) => p.$w}px;
  color: #16181c;
  &::after {
    content: "";
    display: ${(p) => (p.$active ? 'block' : 'none')};
    position: absolute;
    left: 0;
    right: 0;
    bottom: -1px;
    height: 5px;
    border-radius: 3px;
    background: #4478ea;
  }
`;

const TabName = styled.span`
  flex: 1;
  min-width: 0;
`;

const CloseMark = styled.span`
  color: #b4b7bf;
  font-size: 16px;
  line-height: 1;
`;

const TopActions = styled.div`
  margin-left: auto;
  display: flex;
  align-items: center;
  gap: 27px;
  padding-right: 33px;
`;

const SubBar = styled.div`
  flex: 0 0 49px;
  height: 49px;
  display: flex;
  align-items: stretch;
  background: #f7f8fa;
`;

const ViewTabs = styled.div`
  display: flex;
  width: 391px;
  box-shadow: inset 0 -4px 0 #e9eaed;
`;

const ViewTab = styled.div`
  display: flex;
  align-items: center;
  padding: 0 ${(p) => p.$pr}px 0 ${(p) => p.$pl}px;
  color: #14161a;
  white-space: nowrap;
  box-shadow: ${(p) => (p.$active ? 'inset 0 -4px 0 #3f74e6' : 'none')};
`;

const ShowGroup = styled.div`
  margin-left: auto;
  display: flex;
  align-items: center;
  gap: 5px;
  padding-right: 11px;
`;

const ShowLabel = styled.span`
  font-size: 19px;
  color: #111;
`;

const Select = styled.div`
  box-sizing: border-box;
  width: 188px;
  height: 37px;
  display: flex;
  align-items: center;
  justify-content: space-between;
  padding: 0 11px 0 11px;
  border: 1px solid #e3e5e9;
  border-radius: 4px;
  color: #878d9e;
  font-size: 19px;
`;

const Body = styled.div`
  flex: 1;
  min-height: 0;
  display: flex;
`;

const SideBar = styled.aside`
  flex: 0 0 36px;
  display: flex;
  flex-direction: column;
  align-items: center;
  gap: 19px;
  padding-top: 8px;
  background: #f7f8fa;
  color: #6f7483;
`;

const IconSlot = styled.div`
  width: 24px;
  height: 20px;
  display: flex;
  align-items: center;
  justify-content: center;
  font-size: 14px;
  color: ${(p) => (p.$dim ? '#c4c7cf' : '#6f7483')};
`;

const Chart = styled.main`
  position: relative;
  flex: 1;
  min-width: 0;
  overflow: hidden;
  display: flex;
  flex-direction: column;
  justify-content: flex-end;
`;

const SpikeLayer = styled.svg`
  position: absolute;
  inset: 0;
  width: 100%;
  height: 100%;
`;

const FlameRow = styled.div`
  position: relative;
  flex: 0 0 ${ROW_H}px;
  height: ${ROW_H}px;
`;

const Frame = styled.div`
  position: absolute;
  top: 0;
  bottom: 0;
  box-sizing: border-box;
  overflow: hidden;
  white-space: nowrap;
  padding-left: 8px;
  line-height: 26px;
  font-family: "Noto Sans", sans-serif;
  font-size: 19px;
  letter-spacing: 0.15px;
  color: #15151a;
  background: ${(p) => COLORS[p.$c][0]};
  border-bottom: 1px solid ${(p) => COLORS[p.$c][1]};
  box-shadow: inset -1px 0 0 ${(p) => COLORS[p.$c][1]};
`;

const ScrollThumb = styled.div`
  position: absolute;
  right: 5px;
  top: 569px;
  width: 15px;
  height: 1359px;
  background: #e1e1e1;
`;

const Watermark = styled.div`
  position: absolute;
  right: 14px;
  bottom: 8px;
  font-family: "DejaVu Sans", sans-serif;
  font-size: 17px;
  color: rgba(90, 90, 100, 0.5);
  white-space: nowrap;
`;

const FileIcon = () => (
  <svg width="21" height="19" viewBox="0 0 21 19" fill="none" stroke="#a9adb8" strokeWidth="1.3">
    <path d="M2 3.2C2 2 2.8 1 4 1h10.5l4.5 4v10.5c0 1.2-.8 2.5-2 2.5H4c-1.2 0-2-1.2-2-2.5z" />
    <path d="M14.5 1v4H19" />
  </svg>
);

const Icon = ({ children }) => (
  <svg width="22" height="22" viewBox="0 0 22 22" fill="none" stroke="currentColor" strokeWidth="1.4">
    {children}
  </svg>
);

const Corner = () => <path d="M21 22h-5l5-5z" fill="currentColor" stroke="none" />;

const Kebab = () => (
  <svg width="6" height="20" viewBox="0 0 6 20" fill="#6f7483">
    <circle cx="3" cy="3" r="1.7" />
    <circle cx="3" cy="10" r="1.7" />
    <circle cx="3" cy="17" r="1.7" />
  </svg>
);

const MinusBar = () => (
  <svg width="20" height="4" viewBox="0 0 20 4">
    <rect y="1" width="20" height="2" fill="#8a8e9a" />
  </svg>
);

const Chevron = () => (
  <svg width="14" height="9" viewBox="0 0 14 9" fill="none" stroke="#b5b9c3" strokeWidth="1.3">
    <path d="M1 1.5 7 7.5 13 1.5" />
  </svg>
);

const Y0 = BASE_Y - CHART_TOP;
const SEEDED = seededSpikes();

export default function App() {
  const rows = [];
  for (let k = TOP_KS - 1; k >= 0; k -= 1) rows.push(k);
  const spikes = [...SEEDED.map(([x, t, w]) => [x, t, w, 'S', 5]), ...SPIKES];

  return (
    <Page>
      <Global />
      <TopBar>
        <Brand>Profiler</Brand>
        <HomeTab>Home</HomeTab>
        <FileTab $w={416}>
          <FileIcon />
          <TabName>shardingsphere-20230615-072159.jfr</TabName>
          <CloseMark>✕</CloseMark>
        </FileTab>
        <FileTab $w={415}>
          <FileIcon />
          <TabName>shardingsphere-20230616-072201.jfr</TabName>
          <CloseMark>✕</CloseMark>
        </FileTab>
        <FileTab $w={625} $active>
          <FileIcon />
          <TabName>Diff: 'shardingsphere-20230616-072201.jfr' Against 'shardin...</TabName>
          <CloseMark>✕</CloseMark>
        </FileTab>
        <TopActions>
          <Kebab />
          <MinusBar />
        </TopActions>
      </TopBar>
      <SubBar>
        <ViewTabs>
          <ViewTab $active $pl={19} $pr={20}>Flame Graph</ViewTab>
          <ViewTab $pl={18} $pr={20}>Call Tree</ViewTab>
          <ViewTab $pl={20} $pr={0}>Method List</ViewTab>
        </ViewTabs>
        <ShowGroup>
          <ShowLabel>Show:</ShowLabel>
          <Select>
            CPU Samples
            <Chevron />
          </Select>
        </ShowGroup>
      </SubBar>
      <Body>
        <SideBar>
          <IconSlot><Icon><circle cx="11" cy="11" r="9" /><path d="M11 6.5v9M6.5 11h9" /></Icon></IconSlot>
          <IconSlot $dim><Icon><circle cx="11" cy="11" r="9" /><path d="M6.5 11h9" /></Icon></IconSlot>
          <IconSlot $dim>1:1</IconSlot>
          <IconSlot><Icon><path d="M11 3l7.5 4v8L11 19l-7.5-4V7z" /><circle cx="11" cy="11" r="3" /><Corner /></Icon></IconSlot>
          <IconSlot><Icon><path d="M3 6h4l1.5-3h5L15 6h4v12H3z" /><circle cx="11" cy="11.5" r="3.4" /><Corner /></Icon></IconSlot>
          <IconSlot><Icon><circle cx="10" cy="9" r="6.5" /><path d="M14.5 14l5 6" /></Icon></IconSlot>
          <IconSlot><Icon><path d="M11 6h9M14 3 11 6l3 3M1 15h9M7 12l3 3-3 3" /><Corner /></Icon></IconSlot>
        </SideBar>
        <Chart>
          <SpikeLayer>
            {spikes.map(([x, top, w = 1, c = 'S', bottom = 5], i) => (
              <rect
                key={i}
                x={x - 36}
                y={Y0 - top * ROW_H}
                width={w}
                height={(top - bottom + 1) * ROW_H}
                fill={c === 'S' ? '#bfc6dd' : COLORS[c][0]}
              />
            ))}
          </SpikeLayer>
          <ScrollThumb />
          {rows.map((k) => (
            <FlameRow key={k}>
              {DATA[k] &&
                parseRow(DATA[k]).map((f, i) => (
                  <Frame key={i} $c={f.c} style={{ left: f.x0 - 36, width: f.x1 - f.x0 }}>
                    {f.label}
                  </Frame>
                ))}
            </FlameRow>
          ))}
          <Watermark>CSDN @wuweijie@apache.org</Watermark>
        </Chart>
      </Body>
    </Page>
  );
}
